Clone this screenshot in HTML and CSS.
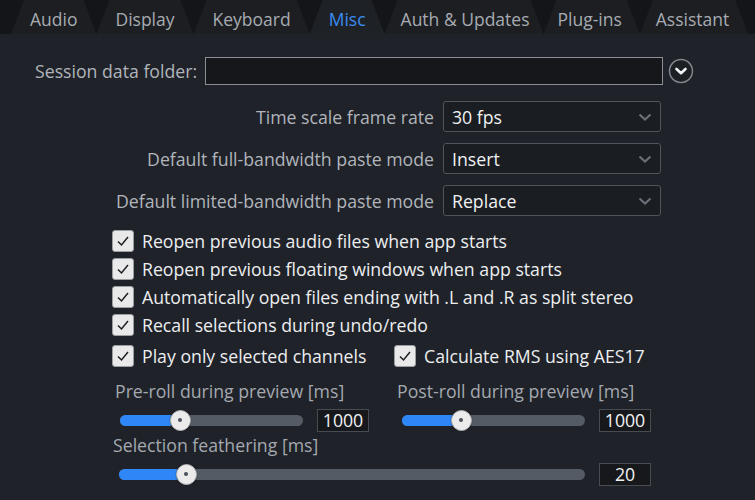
FILE: index.html
```html
<!DOCTYPE html>
<html>
<head>
<meta charset="utf-8">
<link rel="stylesheet" href="styles.css">
</head>
<body>
<div class="tabs">
  <div class="tab">Audio</div>
  <div class="tab">Display</div>
  <div class="tab">Keyboard</div>
  <div class="tab active">Misc</div>
  <div class="tab auth">Auth &amp; Updates</div>
  <div class="tab plugins">Plug-ins</div>
  <div class="tab assistant">Assistant</div>
</div>
<div class="panel">
  <div class="session">
    <span class="label">Session data folder:</span>
    <div class="path"></div>
    <div class="roundbtn"><svg width="26" height="26" viewBox="0 0 26 26"><circle cx="13" cy="13" r="11.5" fill="#1c1f24" stroke="#80858c" stroke-width="1.5"/><path d="M8.5 11 L13 15.2 L17.5 11" fill="none" stroke="#f2f3f4" stroke-width="2.6" stroke-linecap="round" stroke-linejoin="round"/></svg></div>
  </div>
  <div class="selects">
    <span class="slabel">Time scale frame rate</span>
    <div class="select"><span>30 fps</span><svg class="chev" width="14" height="10" viewBox="0 0 14 10"><path d="M1.5 2.5 L7 7.5 L12.5 2.5" fill="none" stroke="#6a7078" stroke-width="2.2"/></svg></div>
    <span class="slabel">Default full-bandwidth paste mode</span>
    <div class="select"><span>Insert</span><svg class="chev" width="14" height="10" viewBox="0 0 14 10"><path d="M1.5 2.5 L7 7.5 L12.5 2.5" fill="none" stroke="#6a7078" stroke-width="2.2"/></svg></div>
    <span class="slabel">Default limited-bandwidth paste mode</span>
    <div class="select"><span>Replace</span><svg class="chev" width="14" height="10" viewBox="0 0 14 10"><path d="M1.5 2.5 L7 7.5 L12.5 2.5" fill="none" stroke="#6a7078" stroke-width="2.2"/></svg></div>
  </div>
  <div class="checks">
    <div class="check"><span class="box"><svg width="14" height="12" viewBox="0 0 14 12"><path d="M2 6.5 L5.5 10 L12 2" fill="none" stroke="#1c1e22" stroke-width="1.5"/></svg></span>Reopen previous audio files when app starts</div>
    <div class="check"><span class="box"><svg width="14" height="12" viewBox="0 0 14 12"><path d="M2 6.5 L5.5 10 L12 2" fill="none" stroke="#1c1e22" stroke-width="1.5"/></svg></span>Reopen previous floating windows when app starts</div>
    <div class="check"><span class="box"><svg width="14" height="12" viewBox="0 0 14 12"><path d="M2 6.5 L5.5 10 L12 2" fill="none" stroke="#1c1e22" stroke-width="1.5"/></svg></span>Automatically open files ending with .L and .R as split stereo</div>
    <div class="check"><span class="box"><svg width="14" height="12" viewBox="0 0 14 12"><path d="M2 6.5 L5.5 10 L12 2" fill="none" stroke="#1c1e22" stroke-width="1.5"/></svg></span>Recall selections during undo/redo</div>
    <div class="checkpair">
      <div class="check col"><span class="box"><svg width="14" height="12" viewBox="0 0 14 12"><path d="M2 6.5 L5.5 10 L12 2" fill="none" stroke="#1c1e22" stroke-width="1.5"/></svg></span>Play only selected channels</div>
      <div class="check"><span class="box"><svg width="14" height="12" viewBox="0 0 14 12"><path d="M2 6.5 L5.5 10 L12 2" fill="none" stroke="#1c1e22" stroke-width="1.5"/></svg></span>Calculate RMS using AES17</div>
    </div>
  </div>
  <div class="sliders">
    <div class="sgroup">
      <div class="sl-label">Pre-roll during preview [ms]</div>
      <div class="sl-row">
        <div class="track short"><div class="fill" style="width:60px"></div><div class="thumb" style="left:60px"></div></div>
        <div class="value">1000</div>
      </div>
    </div>
    <div class="sgroup">
      <div class="sl-label">Post-roll during preview [ms]</div>
      <div class="sl-row">
        <div class="track short"><div class="fill" style="width:59px"></div><div class="thumb" style="left:59px"></div></div>
        <div class="value">1000</div>
      </div>
    </div>
    <div class="sgroup wide">
      <div class="sl-label feather">Selection feathering [ms]</div>
      <div class="sl-row">
        <div class="track long"><div class="fill" style="width:67px"></div><div class="thumb" style="left:67px"></div></div>
        <div class="value">20</div>
      </div>
    </div>
  </div>
</div>
</body>
</html>
```
FILE: styles.css
```css
html, body {
  margin: 0;
  padding: 0;
  background: #1f2229;
  font-family: "Open Sans", Lato, sans-serif;
  overflow: hidden;
}
body { width: 755px; height: 500px; }

.tabs {
  display: flex;
  height: 34px;
  background: #141518;
  padding-left: 11px;
  overflow: hidden;
}
.tab {
  box-sizing: border-box;
  height: 34px;
  padding: 7px 19px 0 19px;
  font-size: 17.5px;
  color: #a7abb1;
  background: #1c1e22;
  clip-path: polygon(13px 0, calc(100% - 13px) 0, 100% 100%, 0 100%);
  white-space: nowrap;
}
.tab.active { color: #3a8bf0; background: #1e2126; }
.tab.auth { padding-left: 16px; padding-right: 14px; }
.tab.plugins { padding-left: 14px; padding-right: 18px; }
.tab.assistant { padding-left: 16px; }

.panel { padding-top: 22px; }

.session {
  display: flex;
  align-items: center;
  padding-left: 35px;
  height: 30px;
}
.label { font-size: 17.7px; color: #b1b5bb; }
.path {
  margin-left: 8px;
  width: 456px;
  height: 26px;
  border: 1.5px solid #8a8e95;
  background: #15171b;
}
.roundbtn { margin-left: 5px; width: 26px; height: 26px; }

.selects {
  display: grid;
  grid-template-columns: 434px 218px;
  grid-auto-rows: 31px;
  column-gap: 9px;
  row-gap: 11px;
  margin-top: 15px;
  align-items: center;
}
.slabel { text-align: right; font-size: 17.7px; color: #b1b5bb; }
.select {
  box-sizing: border-box;
  height: 31px;
  border: 1.5px solid #50555c;
  border-radius: 3px;
  background: #1a1d22;
  display: flex;
  align-items: center;
  justify-content: space-between;
  padding: 0 8px 0 8px;
  font-size: 17.7px;
  color: #f0f1f2;
}
.chev { display: block; }

.checks {
  margin-top: 11px;
  padding-left: 112px;
}
.check {
  display: flex;
  align-items: center;
  height: 28px;
  font-size: 17.7px;
  color: #eceef0;
  white-space: nowrap;
}
.checkpair { display: flex; margin-top: 3px; }
.check.col { width: 282px; }
.box {
  box-sizing: border-box;
  width: 22px;
  height: 22px;
  margin-right: 8px;
  background: #e9e9ea;
  border: 1px solid #9a9da1;
  border-radius: 3px;
  display: flex;
  align-items: center;
  justify-content: center;
}
.box svg { display: block; }

.sliders {
  display: flex;
  flex-wrap: wrap;
  padding-left: 112px;
  margin-top: 9px;
}
.sgroup { width: 282px; }
.sgroup.wide { width: 560px; }
.sl-label {
  font-size: 17.7px;
  color: #a4a9b0;
  padding-left: 3px;
  height: 24px;
  line-height: 24px;
}
.sl-label.feather { padding-left: 1px; }
.sl-row {
  display: flex;
  align-items: center;
  height: 26px;
  margin-top: 4px;
  padding-left: 8px;
}
.wide .sl-row { padding-left: 7px; }
.track {
  position: relative;
  height: 11px;
  border-radius: 6px;
  background: #545b64;
}
.track.short { width: 183px; }
.track.long { width: 466px; }
.fill {
  height: 11px;
  border-radius: 6px;
  background: #2f86f7;
}
.thumb {
  position: absolute;
  top: 50%;
  width: 19px;
  height: 19px;
  margin: -10.5px 0 0 -10.5px;
  border-radius: 50%;
  background: #ebebec;
  border: 1px solid #b5b8bc;
  box-shadow: 0 0 1px #000;
}
.thumb::after {
  content: "";
  position: absolute;
  left: 50%;
  top: 50%;
  width: 4px;
  height: 4px;
  margin: -2px 0 0 -2px;
  border-radius: 50%;
  background: #4a5058;
}
.value {
  box-sizing: border-box;
  margin-left: 14px;
  width: 52px;
  height: 23px;
  border: 1.5px solid #474c53;
  background: #16181c;
  color: #f2f3f4;
  font-size: 17.7px;
  text-align: center;
  line-height: 20px;
}
```
